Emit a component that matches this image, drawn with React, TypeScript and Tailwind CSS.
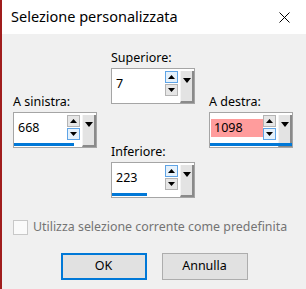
import React from "react";

type SpinProps = {
  value: string;
  bar: number;
  hot: "up" | "down";
  error?: boolean;
};

function Tri({ dir, w, h }: { dir: "up" | "down"; w: number; h: number }) {
  const pts = dir === "up" ? `0,${h} ${w / 2},0 ${w},${h}` : `0,0 ${w},0 ${w / 2},${h}`;
  return (
    <svg width={w} height={h} viewBox={`0 0 ${w} ${h}`} className="block">
      <polygon points={pts} fill="#000" />
    </svg>
  );
}

function SpinBox({ value, bar, hot, error }: SpinProps) {
  const btn = (dir: "up" | "down") =>
    hot === dir
      ? "border-[#5fa4e6] bg-[#e5f1fb]"
      : "border-[#b4b4b4] bg-[#e6e6e6]";

  return (
    <div className="relative flex h-[36px] w-[84px] items-start border border-[#a5a5a5] bg-white">
      <div
        className={`ml-[1px] mt-[6px] flex h-[18px] w-[52px] items-center pl-[3px] text-[12.5px] text-black ${
          error ? "bg-[#ff9c9c]" : "bg-white"
        }`}
      >
        {value}
      </div>
      <div className="mt-[2px] flex w-[13px] flex-col gap-[1px]">
        <div className={`flex h-[12px] items-center justify-center border ${btn("up")}`}>
          <Tri dir="up" w={7} h={4} />
        </div>
        <div className={`flex h-[12px] items-center justify-center border ${btn("down")}`}>
          <Tri dir="down" w={7} h={4} />
        </div>
      </div>
      <div className="ml-[2px] mt-[2px] flex h-[32px] w-[14px] justify-center border-b-2 border-l border-r-2 border-b-[#8a8a8a] border-l-[#f4f4f4] border-r-[#8a8a8a] bg-[#e3e3e3] pt-[7px]">
        <Tri dir="down" w={8} h={5} />
      </div>
      <div
        className="absolute bottom-[1px] left-0 h-[3px] bg-[#0078d7]"
        style={{ width: bar }}
      />
    </div>
  );
}

function Field({ label, children }: { label: string; children: React.ReactNode }) {
  return (
    <div className="flex flex-col">
      <div className="h-[16px] text-[12.5px] leading-[16px] text-black">{label}</div>
      <div className="mt-[2px]">{children}</div>
    </div>
  );
}

export default function App() {
  return (
    <div
      className="flex h-[289px] w-[306px] flex-col border-l-2 border-[#a01d1d] bg-[#f0f0f0]"
      style={{ fontFamily: '"Segoe UI", "Noto Sans", sans-serif' }}
    >
      <div className="flex h-[34px] items-center justify-between bg-white pl-[9px] pr-[16px]">
        <span className="text-[14.5px] text-black">Selezione personalizzata</span>
        <svg width="11" height="11" viewBox="0 0 11 11">
          <path d="M0.5 0.5 L10.5 10.5 M10.5 0.5 L0.5 10.5" stroke="#000" strokeWidth="1" />
        </svg>
      </div>

      <div className="grid grid-cols-[84px_84px_84px] gap-x-[14px] pl-[11px]">
        <div className="mt-[60px]">
          <Field label="A sinistra:">
            <SpinBox value="668" bar={60} hot="down" />
          </Field>
        </div>
        <div className="mt-[16px] flex flex-col gap-[40px]">
          <Field label="Superiore:">
            <SpinBox value="7" bar={0} hot="up" />
          </Field>
          <Field label="Inferiore:">
            <SpinBox value="223" bar={35} hot="up" />
          </Field>
        </div>
        <div className="mt-[60px]">
          <Field label="A destra:">
            <SpinBox value="1098" bar={82} hot="down" error />
          </Field>
        </div>
      </div>

      <div className="mt-[20px] flex items-center gap-[5px] pl-[11px]">
        <div className="h-[15px] w-[15px] border border-[#c8c8c8] bg-[#fafafa]" />
        <span className="text-[12.4px] text-[#747474]">Utilizza selezione corrente come predefinita</span>
      </div>

      <div className="mt-[16px] flex justify-center gap-[15px]">
        <button className="h-[27px] w-[86px] border-2 border-[#0078d7] bg-[#e1e1e1] text-[12.5px] text-black">
          OK
        </button>
        <button className="h-[27px] w-[86px] border border-[#adadad] bg-[#e1e1e1] text-[12.5px] text-black">
          Annulla
        </button>
      </div>
    </div>
  );
}
